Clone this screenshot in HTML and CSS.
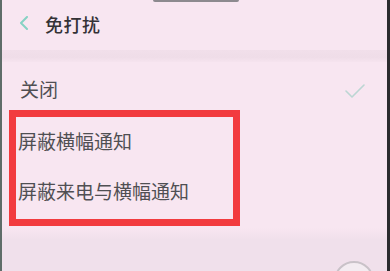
FILE: index.html
```html
<!DOCTYPE html>
<html lang="zh">
<head>
<meta charset="utf-8">
<link rel="stylesheet" href="styles.css">
</head>
<body>
<div class="screen">
  <div class="notch"></div>
  <header class="header">
    <svg class="back" width="10" height="14" viewBox="0 0 10 14"><polyline points="8,1 2,7 8,13" fill="none" stroke="#86d2c4" stroke-width="2" stroke-linecap="round" stroke-linejoin="round"/></svg>
    <span class="title">免打扰</span>
  </header>
  <div class="band"></div>
  <div class="row first">
    <span class="label">关闭</span>
    <svg class="check" width="20" height="16" viewBox="0 0 20 16"><polyline points="1,8 7,14 19,2" fill="none" stroke="#bcd6d3" stroke-width="1.6" stroke-linecap="round" stroke-linejoin="round"/></svg>
  </div>
  <div class="box">
    <div class="row boxed"><span class="label">屏蔽横幅通知</span></div>
    <div class="row boxed"><span class="label">屏蔽来电与横幅通知</span></div>
  </div>
  <div class="fab"></div>
</div>
</body>
</html>
```
FILE: styles.css
```css
html, body {
  margin: 0;
  padding: 0;
}
body {
  width: 390px;
  height: 271px;
  overflow: hidden;
  font-family: "Noto Sans CJK SC", "Noto Sans", sans-serif;
}
.screen {
  position: relative;
  box-sizing: border-box;
  width: 390px;
  height: 271px;
  background: linear-gradient(#f8e6f1 0px, #f8e6f1 228px, #f0e0eb 240px, #f0e0eb 271px);
  border-left: 2px solid #5f6d69;
  border-right: 3px solid #2b2b2e;
  display: flex;
  flex-direction: column;
  overflow: hidden;
}
.notch {
  position: absolute;
  left: 151px;
  top: 0;
  width: 86px;
  height: 2px;
  background: #8d8a8f;
  border-radius: 0 0 2px 2px;
}
.header {
  height: 50px;
  display: flex;
  align-items: center;
  padding-left: 17px;
  box-sizing: border-box;
  padding-bottom: 3px;
}
.back {
  display: block;
  margin-right: 16px;
  margin-top: -2px;
}
.title {
  font-size: 18px;
  font-weight: 500;
  color: #343236;
  letter-spacing: 0.5px;
}
.band {
  height: 12px;
  background: linear-gradient(#f1dfea, #efdde8 60%, #f6e4ef);
}
.row {
  display: flex;
  align-items: center;
  box-sizing: border-box;
}
.row.first {
  height: 48px;
  padding-top: 5px;
  padding-left: 18px;
  padding-right: 22px;
  justify-content: space-between;
}
.label {
  font-size: 19px;
  color: #504f53;
  line-height: 1;
}
.check {
  display: block;
  margin-top: 4px;
}
.box {
  margin-left: 7px;
  width: 231px;
  height: 116px;
  box-sizing: border-box;
  border: 7px solid #f23b3f;
  padding-left: 2px;
  padding-bottom: 2px;
}
.row.boxed {
  height: 50px;
  padding-bottom: 3px;
}
.fab {
  position: absolute;
  left: 332px;
  top: 261px;
  width: 40px;
  height: 40px;
  border-radius: 50%;
  border: 2px solid #c9c2c8;
  background: #f3ecf1;
  box-sizing: border-box;
}
```
